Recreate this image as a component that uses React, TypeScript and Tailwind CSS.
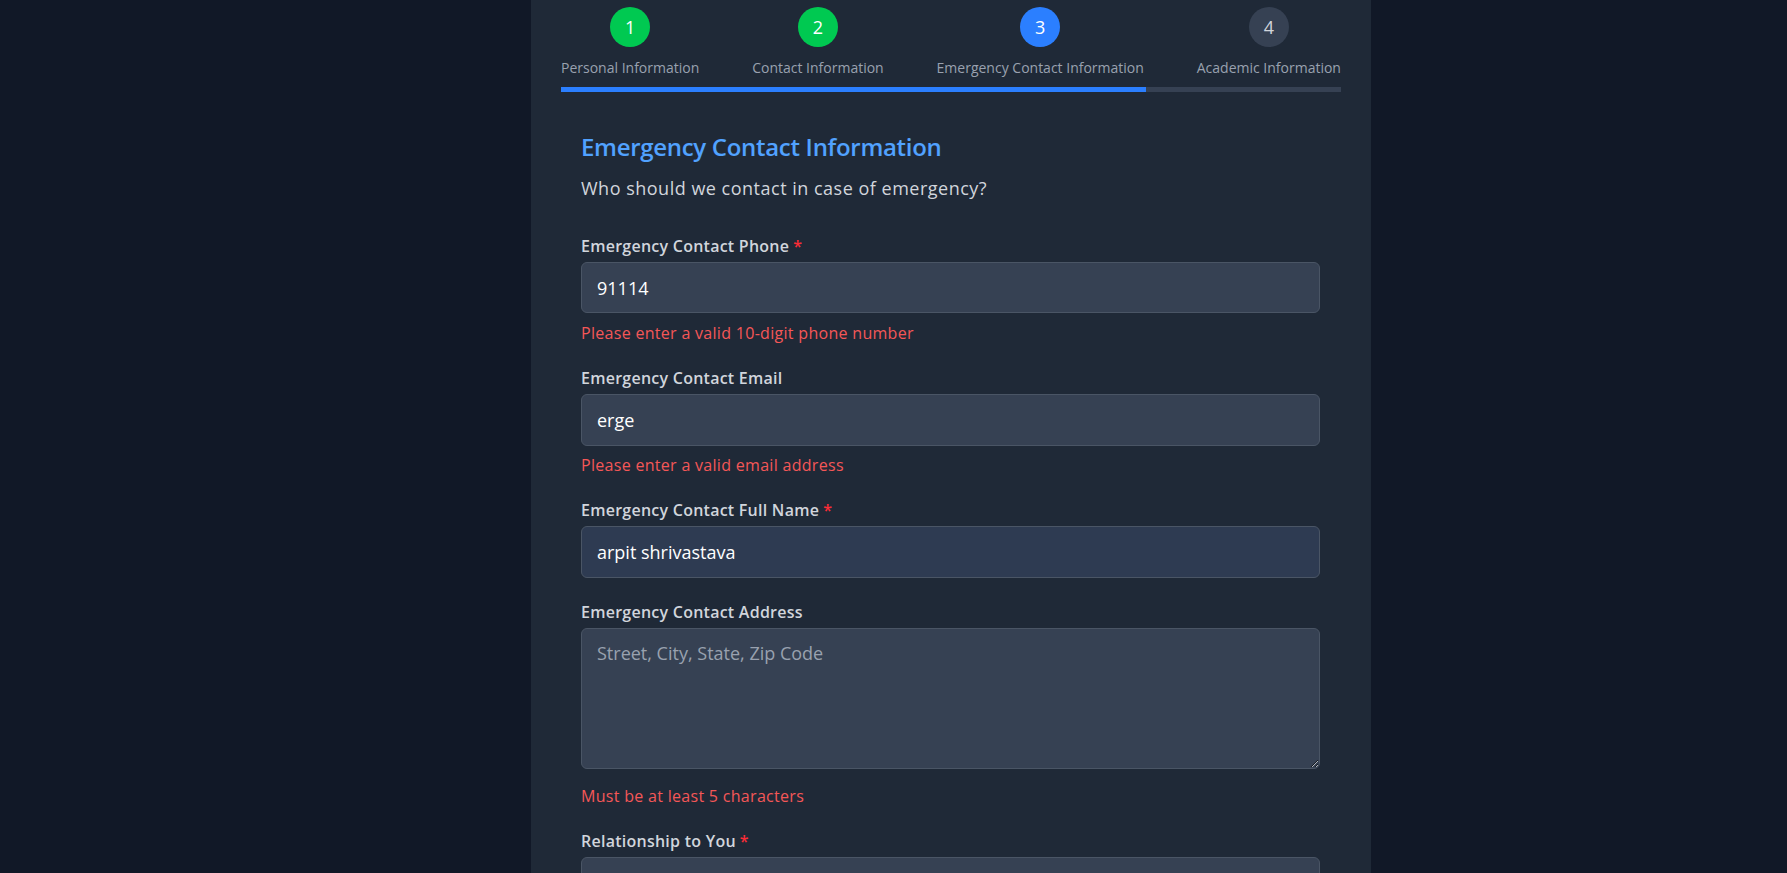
import React from 'react';

const steps = [
  { n: 1, label: 'Personal Information', state: 'done' },
  { n: 2, label: 'Contact Information', state: 'done' },
  { n: 3, label: 'Emergency Contact Information', state: 'active' },
  { n: 4, label: 'Academic Information', state: 'todo' },
];

function Label({ text, required }: { text: string; required?: boolean }) {
  return (
    <label className="block h-6 leading-6 text-base font-semibold text-gray-300 mb-1 tracking-[0.25px]">
      {text}
      {required && <span className="text-red-500 ml-1">*</span>}
    </label>
  );
}

function ErrorText({ text, className = 'mt-2' }: { text: string; className?: string }) {
  return <p className={`${className} text-base leading-6 text-[#f45757] tracking-[0.3px]`}>{text}</p>;
}

export default function App() {
  return (
    <div
      className="min-h-[873px] bg-[#111827] flex"
      style={{ fontFamily: "'Segoe UI', 'Open Sans', 'Noto Sans', sans-serif" }}
    >
      <div className="ml-[531px] w-[840px] bg-[#1f2937] h-[873px] overflow-hidden">
        {/* Stepper */}
        <div className="px-[30px] pt-[7px]">
          <div className="flex justify-between">
            {steps.map((s) => (
              <div key={s.n} className="flex flex-col items-center">
                <div
                  className={
                    'w-10 h-10 rounded-full flex items-center justify-center text-lg ' +
                    (s.state === 'done'
                      ? 'bg-green-500 text-white'
                      : s.state === 'active'
                      ? 'bg-blue-500 text-white'
                      : 'bg-gray-700 text-gray-300')
                  }
                >
                  {s.n}
                </div>
                <span className="mt-[11px] text-sm leading-5 text-gray-400 whitespace-nowrap">{s.label}</span>
              </div>
            ))}
          </div>
          <div className="mt-[9px] h-[5px] bg-gray-700 overflow-hidden">
            <div className="h-full bg-blue-500" style={{ width: '75%' }} />
          </div>
        </div>

        {/* Form */}
        <div className="pl-[50px] pr-[51px] pt-[39px]">
          <h2 className="text-2xl leading-8 font-semibold text-blue-400 tracking-[-0.3px]">Emergency Contact Information</h2>
          <p className="mt-[11px] text-lg leading-7 text-gray-300 tracking-[0.5px]">Who should we contact in case of emergency?</p>

          <div className="mt-8 flex flex-col gap-[21px]">
            <div>
              <Label text="Emergency Contact Phone" required />
              <input
                defaultValue="91114"
                className="block w-full h-[51px] px-[15px] rounded-md bg-gray-700 border border-gray-600 text-lg text-white outline-none"
              />
              <ErrorText text="Please enter a valid 10-digit phone number" />
            </div>

            <div>
              <Label text="Emergency Contact Email" />
              <input
                defaultValue="erge"
                className="block w-full h-[52px] px-[15px] rounded-md bg-gray-700 border border-gray-600 text-lg text-white outline-none"
              />
              <ErrorText text="Please enter a valid email address" className="mt-[7px]" />
            </div>

            <div>
              <Label text="Emergency Contact Full Name" required />
              <input
                defaultValue="arpit shrivastava"
                className="block w-full h-[52px] px-[15px] rounded-md bg-[#2e3b52] border border-gray-600 text-lg text-white outline-none"
              />
            </div>

            <div className="mt-px">
              <Label text="Emergency Contact Address" />
              <textarea
                placeholder="Street, City, State, Zip Code"
                className="block w-full h-[141px] px-[15px] py-[10px] rounded-md bg-gray-700 border border-gray-600 text-lg leading-7 text-white placeholder:text-gray-400 outline-none"
              />
              <ErrorText text="Must be at least 5 characters" className="mt-[15px]" />
            </div>

            <div>
              <Label text="Relationship to You" required />
              <input className="block w-full h-[52px] px-[15px] rounded-md bg-gray-700 border border-gray-600 text-lg text-white outline-none" />
            </div>
          </div>
        </div>
      </div>
    </div>
  );
}
